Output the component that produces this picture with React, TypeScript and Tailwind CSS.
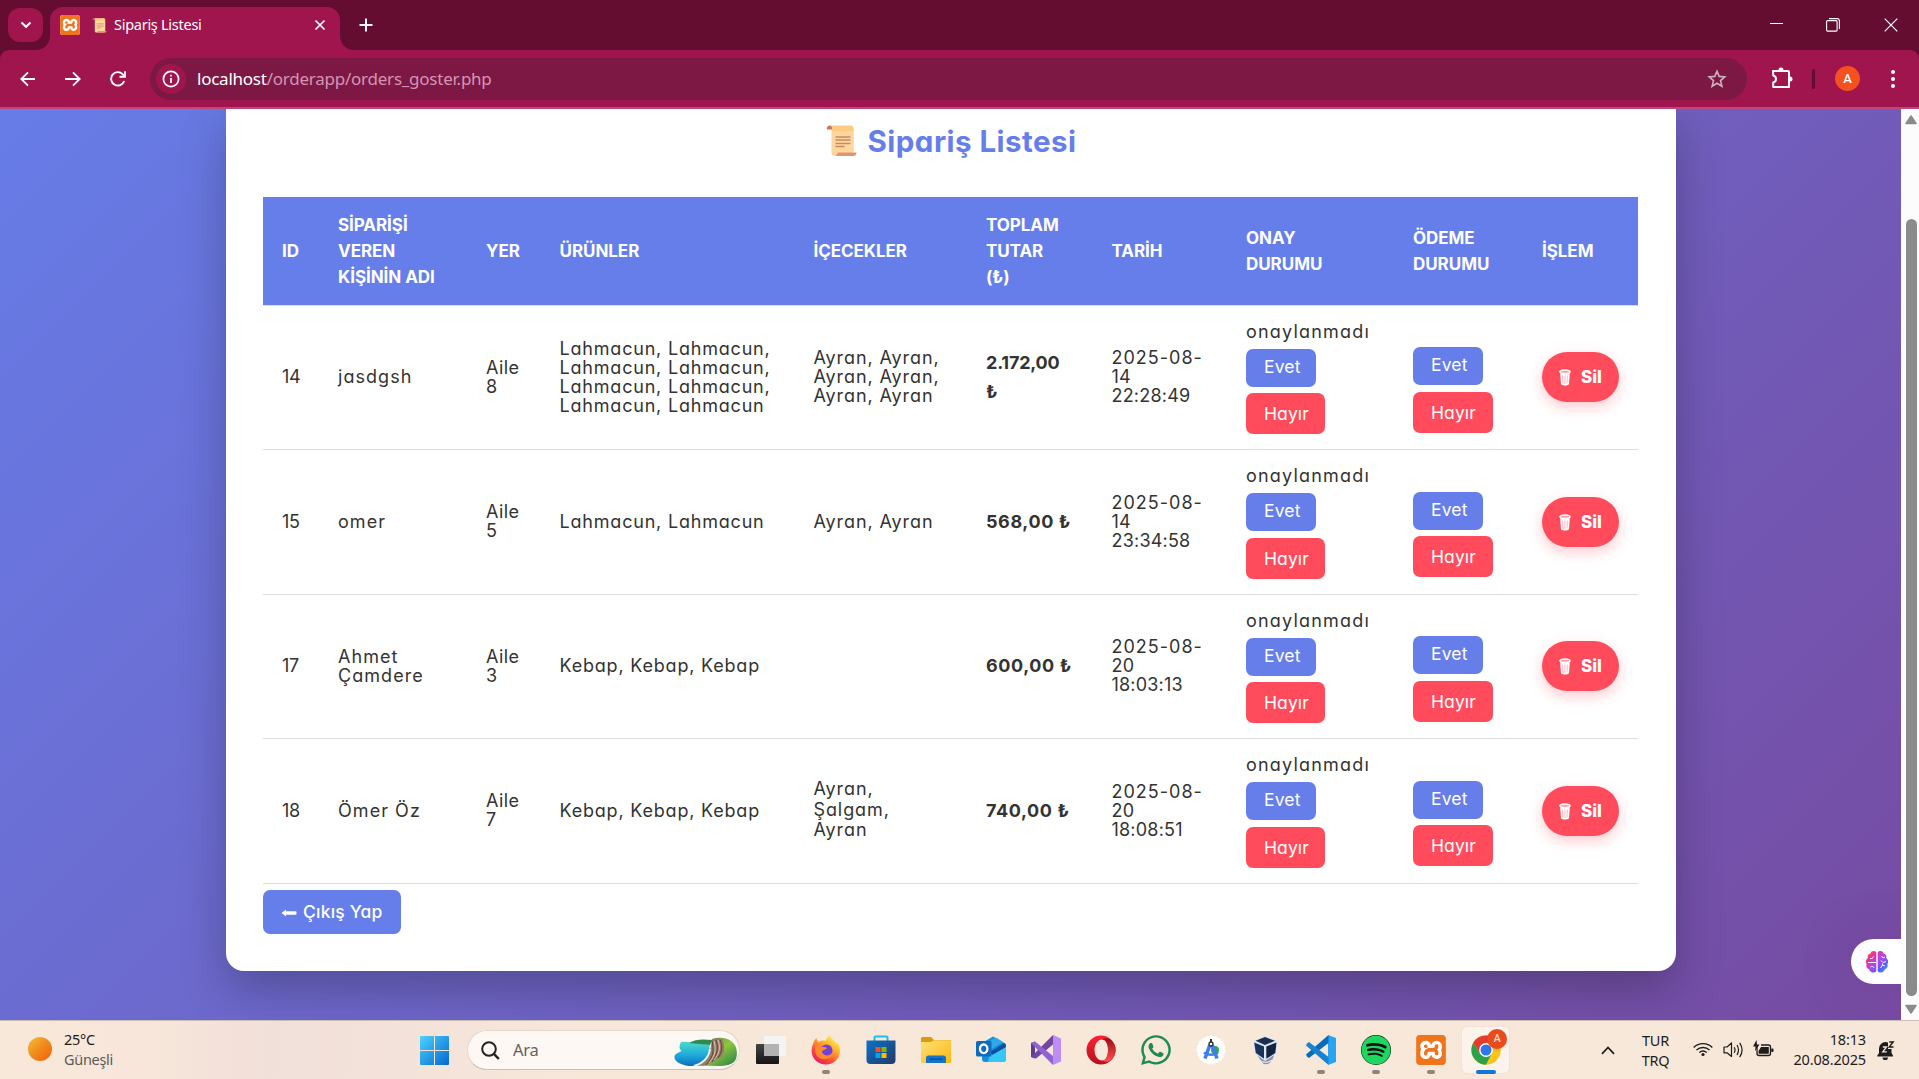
import type { ReactNode } from "react";
import { FaSpotify, FaWhatsapp } from "react-icons/fa";
import { SiXampp } from "react-icons/si";

/* ---------- Icons ---------- */

function Scroll({ className }: { className: string }) {
  return (
    <svg viewBox="0 0 30 32" className={className}>
      <path d="M4 1H24.500a3 3 0 0 1 2.500 3V27H8.500L5.500 5Z" fill="#fdd291" />
      <path d="M5 5V28a3 3 0 0 0 3 3H26V27H27V4Z" fill="#fed7a0" />
      <path d="M4 .5H25a3 3 0 0 1 2 3V6H6Z" fill="#fccb80" />
      <path d="M3.500 .5A3 3 0 0 0 .5 4.500H5.500V3A2.500 2.500 0 0 0 3.500 .5Z" fill="#c97a55" />
      <path d="M11 27.500H30a3.500 3.500 0 0 1-3.500 3.500H8c2 0 3-1.500 3-3.500Z" fill="#e2946c" />
      <path d="M9 12H24M9 15H24M9 18.500H24M9 21.500H18" stroke="#c98a62" strokeWidth="1.300" />
    </svg>
  );
}

function Xampp({ className }: { className: string }) {
  return (
    <span className={`block overflow-hidden rounded-[3px] bg-white ${className}`}>
      <SiXampp className="size-full text-[#f0741c]" />
    </span>
  );
}

function Trash() {
  return (
    <svg viewBox="0 0 12 17" className="h-[17px] w-3">
      <path d="M1.200 3.500 2 15.200C3.500 17 8.500 17 10 15.200L10.800 3.500Z" fill="#fff" />
      <ellipse cx="6" cy="2.800" rx="5.800" ry="2.500" fill="#fff" />
      <ellipse cx="6" cy="2.700" rx="4" ry="1" fill="#ff9aa6" />
      <path d="M3.500 6.500 4 14.500M6 6.500V15M8.500 6.500 8 14.500" stroke="#ffb3bc" strokeWidth=".9" />
    </svg>
  );
}

function Brain() {
  return (
    <svg viewBox="0 0 24 24" className="size-6">
      <defs>
        <linearGradient id="brain" x1="0" y1="0" x2="1" y2="1">
          <stop offset="0" stopColor="#ff9a1f" />
          <stop offset=".22" stopColor="#f0338f" />
          <stop offset=".5" stopColor="#b045f0" />
          <stop offset=".75" stopColor="#5b5cf5" />
          <stop offset="1" stopColor="#2fc4ff" />
        </linearGradient>
      </defs>
      <path
        d="M11.300 2.500C9.500.2 6 .8 5.600 3.400 3 3.600 2 6 2.800 8 .8 9.200.2 12.500 1.600 14c-.9 2.500.2 4.800 2.500 5.200C5 22.500 9.500 24 11.300 21ZM12.700 2.500c1.800-2.300 5.300-1.700 5.700.9 2.600.2 3.600 2.600 2.800 4.600 2 1.200 2.600 4.500 1.200 6 .9 2.500-.2 4.800-2.500 5.200C19 22.500 14.500 24 12.700 21Z"
        fill="url(#brain)"
      />
      <path
        d="M3 12.500H11M5 8.500c1.500.5 3-.3 3.500-2M5.500 17c1-1 2.800-.7 3.500.8M16.500 6l1.500 2 2-1M21 11.500l-3 1-2-2M15.500 18l2-3 2.500 1M17.500 15V13.500"
        stroke="#fff"
        strokeWidth="1"
        fill="none"
      />
    </svg>
  );
}

function Coast() {
  return (
    <svg viewBox="0 0 64 30" className="h-[30px] w-16">
      <defs>
        <linearGradient id="sea" x1="0" y1="0" x2="0" y2="1">
          <stop offset="0" stopColor="#49dcc8" />
          <stop offset=".55" stopColor="#1fa9dc" />
          <stop offset="1" stopColor="#0d6fb8" />
        </linearGradient>
        <linearGradient id="grass" x1="0" y1="0" x2="1" y2="1">
          <stop offset="0" stopColor="#3d9144" />
          <stop offset=".5" stopColor="#8fc63d" />
          <stop offset="1" stopColor="#1f7d4a" />
        </linearGradient>
      </defs>
      <path d="M38 2c6-2 14-2 19 2 6 4 7 12 5 18-3 6-10 7-18 7l-20-.5C30 20 40 14 38 2Z" fill="url(#grass)" />
      <path d="M37 3c4-2 8-2 11-1 3 6 3 12 0 17-5 4-12 7-17 9.500l-9 .5c7-8 17-12 15-26Z" fill="#9a7b68" />
      <path d="M38 4c2 9 2 15-6 24M42 3c3 8 1 15-4 22M46 3c3 6 2 12-2 18" stroke="#5d4440" strokeWidth="1" fill="none" />
      <path d="M40 4c2 8 2 14-5 22M44 3c3 8 1 14-4 20" stroke="#e3cdb4" strokeWidth=".9" fill="none" />
      <path d="M7 5c8-1 20 2 29 3-2 3 2 6-2 11-4 7-9 10-16 10C8 29-2 24 1 18c3-3 7-3 6-5-2-1-2-4 0-8Z" fill="url(#sea)" />
      <path d="M36 12c-1 9-8 15-16 17" stroke="#e9f7fb" strokeWidth="2" fill="none" />
      <path d="M15 6c6-4 14-4 23-3l-2 5Z" fill="#2f8a4d" />
    </svg>
  );
}

const svgBox = "size-[30px] overflow-visible";

function TaskView() {
  return (
    <svg viewBox="0 0 30 30" className={svgBox}>
      <defs>
        <linearGradient id="tv" x1="0" y1="0" x2="0" y2="1">
          <stop offset="0" stopColor="#444" />
          <stop offset="1" stopColor="#151515" />
        </linearGradient>
      </defs>
      <rect x="0" y="9" width="23" height="20" rx="1" fill="url(#tv)" />
      <rect x="8" y="1" width="22" height="20" rx="1" fill="#f4f4f4" />
      <path d="M8 9H23V21H8Z" fill="#b3b3b3" />
    </svg>
  );
}

function Firefox() {
  return (
    <svg viewBox="0 0 30 30" className={svgBox}>
      <defs>
        <linearGradient id="ff" x1=".8" y1=".1" x2=".2" y2="1">
          <stop offset="0" stopColor="#fff04a" />
          <stop offset=".35" stopColor="#ffa52a" />
          <stop offset=".65" stopColor="#ff5038" />
          <stop offset="1" stopColor="#e3106b" />
        </linearGradient>
      </defs>
      <path
        d="M19 0c-4 3-4 6-4 6-3-1-6 0-7 1C6 6 5.500 4 5.500 3 3 5 2.500 8 2.500 8 1 11 0 15 1 19c1.500 6 7 10.500 14 10.500 8 0 14-6 14-13.500 0-4-1-7-3.500-9l.2 2.500C24 5 20 4.500 19 0Z"
        fill="url(#ff)"
      />
      <circle cx="15.500" cy="15.500" r="6" fill="#7142d8" />
      <path d="M4 12c2-2 5-2 7 0 2 0 4 0 5 1-1 2-4 1-5 4 1 4 8 5 11 0 1 7-11 10-16 4-2-3-2-6-2-9Z" fill="#ff8a2a" />
    </svg>
  );
}

function Store() {
  return (
    <svg viewBox="0 0 30 30" className={svgBox}>
      <defs>
        <linearGradient id="st" x1="0" y1="0" x2="1" y2="1">
          <stop offset="0" stopColor="#0a72c8" />
          <stop offset="1" stopColor="#233a66" />
        </linearGradient>
      </defs>
      <path d="M8.500 6V2.500a1 1 0 0 1 1-1H20.500a1 1 0 0 1 1 1V6" fill="none" stroke="#21bdf0" strokeWidth="2" />
      <path d="M.5 5.500H29.500V25a4 4 0 0 1-4 4H4.500a4 4 0 0 1-4-4Z" fill="url(#st)" />
      <path d="M9.500 12H14.500V17H9.500Z" fill="#f25022" />
      <path d="M15.500 12H20.500V17H15.500Z" fill="#7fba00" />
      <path d="M9.500 18H14.500V23H9.500Z" fill="#00a4ef" />
      <path d="M15.500 18H20.500V23H15.500Z" fill="#ffb900" />
    </svg>
  );
}

function Folder() {
  return (
    <svg viewBox="0 0 30 30" className={svgBox}>
      <defs>
        <linearGradient id="fo" x1="0" y1="0" x2="1" y2="1">
          <stop offset="0" stopColor="#ffe07a" />
          <stop offset="1" stopColor="#fbb90d" />
        </linearGradient>
      </defs>
      <path d="M0 3.500A1.500 1.500 0 0 1 1.500 2H10L13 5H28.500A1.500 1.500 0 0 1 30 6.500V10H0Z" fill="#dd9a0a" />
      <path d="M0 7H10L13 5.200H29a1 1 0 0 1 1 1V27a1 1 0 0 1-1 1H1a1 1 0 0 1-1-1Z" fill="url(#fo)" />
      <path d="M5 28V23a2.500 2.500 0 0 1 2.500-2.500H22.500A2.500 2.500 0 0 1 25 23V28Z" fill="#1374c9" />
      <path d="M8.500 24.200H21.500" stroke="#0b4d90" strokeWidth="1.200" />
    </svg>
  );
}

function Outlook() {
  return (
    <svg viewBox="0 0 30 30" className={svgBox}>
      <path d="M6 8 17 1.500 30 9V24a3 3 0 0 1-3 3H9a3 3 0 0 1-3-3Z" fill="#1490df" />
      <path d="M14 18 30 9V24a3 3 0 0 1-3 3H12Z" fill="#38c6f4" />
      <path d="M14 17 28 8l2 2v2L16 20Z" fill="#0b4fa0" />
      <path d="M12 7 20 2.500 27 7 14 15Z" fill="#2da8e8" />
      <rect x="0" y="6" width="15.500" height="15.500" rx="1.500" fill="#0f6cbd" />
      <ellipse cx="7.700" cy="13.800" rx="3.700" ry="4.300" fill="none" stroke="#fff" strokeWidth="2.300" />
    </svg>
  );
}

function VisualStudio() {
  return (
    <svg viewBox="0 0 30 30" className={svgBox}>
      <path d="M0 8 4 6.500V23.500L0 22Z" fill="#5d3b96" />
      <path d="M22 0 30 3.500V26.500L22 30Z" fill="#bd8cf5" />
      <path d="M22 0V9.500L5 23.500 0 22Z" fill="#74479f" />
      <path d="M4 6.500 22 21V30L0 8Z" fill="#9062d4" />
    </svg>
  );
}

function Opera() {
  return (
    <svg viewBox="0 0 30 30" className={svgBox}>
      <defs>
        <linearGradient id="opA" x1="0" y1="0" x2="0" y2="1">
          <stop offset="0" stopColor="#ff2033" />
          <stop offset="1" stopColor="#b5101c" />
        </linearGradient>
        <linearGradient id="opB" x1="0" y1="0" x2="0" y2="1">
          <stop offset="0" stopColor="#9c0d12" />
          <stop offset="1" stopColor="#ff5252" />
        </linearGradient>
      </defs>
      <path fillRule="evenodd" d="M15 .5a14.500 14.500 0 1 0 0 29 14.500 14.500 0 1 0 0-29ZM16 4.500c4 0 6 5 6 10.500S20 25.500 16 25.500 8.500 21 8.500 15 12 4.500 16 4.500Z" fill="url(#opA)" />
      <path d="M16 4.500c3-2 6-1.500 8.500 0 7 6 7 15 0 21-2.500 1.500-5.500 2-8.500 0 4 0 6-5 6-10.500S20 4.500 16 4.500Z" fill="url(#opB)" />
    </svg>
  );
}

function AndroidStudio() {
  return (
    <svg viewBox="0 0 30 30" className={svgBox}>
      <circle cx="15" cy="15" r="13.700" fill="#fff" stroke="#fff" strokeWidth="1.500" strokeDasharray="3 1.500" />
      <circle cx="19" cy="15" r="4" fill="#31a853" />
      <path d="M13.800 10 9 23.500M16.200 10 21 23.500" stroke="#3f7df0" strokeWidth="3.600" />
      <path d="M8 17.500C12 20.500 18 20.500 22 17.500" stroke="#3f7df0" strokeWidth="2.600" fill="none" />
      <path d="M15 4V7" stroke="#333" strokeWidth="2" />
      <circle cx="15" cy="9" r="2" fill="#fff" stroke="#303030" strokeWidth="1.300" />
    </svg>
  );
}

function VirtualBox() {
  return (
    <svg viewBox="0 0 30 30" className={svgBox}>
      <path d="M6 20 12 28.500C15 30.500 21 29 23 20Z" fill="#8390ad" />
      <path d="M8 25c4 3 9 3 13 0" stroke="#dfe5f2" strokeWidth="1.200" fill="none" />
      <path d="M14 1 26.500 5.500 25.500 18.500 14 26 3.500 18.500 2 5.500Z" fill="#dfe6f1" />
      <path d="M14 2 24 5.800 14 10 4.500 5.800Z" fill="#19304f" />
      <path d="M3.200 7.500 13 11.500V23.800L4.800 18Z" fill="#1b3358" />
      <path d="M25.500 7.500 15.300 11.500V23.800L24.300 18Z" fill="#122440" />
    </svg>
  );
}

function VsCode() {
  return (
    <svg viewBox="0 0 30 30" className={svgBox}>
      <path d="M22 0 30 3V27L22 30Z" fill="#27a5f2" />
      <path d="M1 21.500 3 23 22.500 8V0L0 19.500Z" fill="#0a6bb8" />
      <path d="M1 8.500 3 7 22.500 22V30L0 10.500Z" fill="#1583cf" />
    </svg>
  );
}

function Chrome() {
  return (
    <svg viewBox="0 0 30 30" className={svgBox}>
      <circle cx="15" cy="15" r="14.700" fill="#fcc419" />
      <path d="M2.300 7.700A14.700 14.700 0 0 0 15 29.700L21 18 15 15 9 18.500Z" fill="#2da04c" />
      <path d="M2.300 7.700A14.700 14.700 0 0 1 27.700 7.700H15L9 18.500Z" fill="#e33b2e" />
      <circle cx="15" cy="15" r="6.900" fill="#fff" />
      <circle cx="15" cy="15" r="5.500" fill="#2f76ea" />
    </svg>
  );
}

/* ---------- Browser chrome ---------- */

function TabStrip() {
  return (
    <div className="flex h-[50px] items-start bg-[#650d31] text-white">
      <div className="mt-2 ml-2 flex h-[34px] w-[35px] items-center justify-center rounded-xl bg-[#a1154e]">
        <svg viewBox="0 0 12 8" className="h-2 w-3">
          <path d="M1.500 1.500 6 5.800 10.500 1.500" fill="none" stroke="#fff" strokeWidth="2" />
        </svg>
      </div>
      <svg viewBox="0 0 14 14" className="mt-9 -ml-[7px] size-3.5">
        <path d="M14 0V14H0A14 14 0 0 0 14 0Z" fill="#a1154e" />
      </svg>
      <div className="mt-[7px] flex h-[43px] w-[290px] items-center rounded-t-[13px] bg-[#a1154e] pr-3.5 pb-[7px] pl-2.5">
        <Xampp className="size-5" />
        <Scroll className="ml-3 h-[15px] w-[15px]" />
        <span className="ml-[7px] font-['Noto_Sans'] text-[14.500px] tracking-[-0.27px] whitespace-nowrap">Sipariş Listesi</span>
        <svg viewBox="0 0 12 12" className="ml-auto size-3">
          <path d="M1.500 1.500 10.500 10.500M10.500 1.500 1.500 10.500" stroke="#fff" strokeWidth="1.700" />
        </svg>
      </div>
      <svg viewBox="0 0 14 14" className="mt-9 size-3.5">
        <path d="M0 0V14H14A14 14 0 0 1 0 0Z" fill="#a1154e" />
      </svg>
      <svg viewBox="0 0 14 14" className="mt-[18px] ml-[5px] size-3.5">
        <path d="M7 .5V13.500M.5 7H13.500" stroke="#fff" strokeWidth="2" />
      </svg>
      <div className="ml-auto flex items-center pt-[18px] pr-[21px]">
        <div className="mb-1 h-px w-[13px] bg-white" />
        <svg viewBox="0 0 14 14" className="ml-[43px] size-3.5" fill="none" stroke="#fff" strokeWidth="1.100">
          <rect x=".6" y="2.600" width="10.500" height="10.500" rx="1" />
          <path d="M3 .6H11.500A2 2 0 0 1 13.400 2.500V11" />
        </svg>
        <svg viewBox="0 0 14 14" className="ml-11 size-3.5" stroke="#fff" strokeWidth="1.200">
          <path d="M.7.7 13.300 13.300M13.300.7.7 13.300" />
        </svg>
      </div>
    </div>
  );
}

function Toolbar() {
  return (
    <div className="bg-[#650d31]">
      <div className="flex h-[59px] items-center rounded-t-[9px] border-b-2 border-[#c0457a] bg-[#a1154e]">
        <svg viewBox="0 0 16 16" className="ml-5 size-4" fill="none" stroke="#fff" strokeWidth="1.800">
          <path d="M15 8H1.500M8 1.300 1.300 8 8 14.700" />
        </svg>
        <svg viewBox="0 0 16 16" className="ml-[29px] size-4" fill="none" stroke="#fff" strokeWidth="1.800">
          <path d="M0 8H14.500M8 1.300 14.700 8 8 14.700" />
        </svg>
        <svg viewBox="0 0 16 16" className="ml-[29px] size-4" fill="none" stroke="#fff" strokeWidth="1.900">
          <path d="M14.200 10A6.700 6.700 0 1 1 12.800 3.300L14 4.500" />
          <path d="M15 .3V5.800H9.500" />
        </svg>
        <div className="ml-6 flex h-[42px] w-[1597px] items-center rounded-full bg-[#7c1843] pr-5 pl-1.5">
          <div className="flex size-[30px] items-center justify-center rounded-full bg-[#a1154e]">
            <svg viewBox="0 0 18 18" className="size-[18px]" fill="none" stroke="#fff" strokeWidth="1.700">
              <circle cx="9" cy="9" r="7.600" />
              <path d="M9 8V13M9 4.800V6.600" />
            </svg>
          </div>
          <span className="mt-px ml-[11px] font-['Noto_Sans'] text-[17px] tracking-[-0.24px] text-[#d694b3]">
            <span className="text-white">localhost</span>/orderapp/orders_goster.php
          </span>
          <svg viewBox="0 0 20 20" className="mt-px ml-auto size-5" fill="none" stroke="#ccb3bf" strokeWidth="1.600">
            <path d="M10 2.200 12.200 7.400 17.800 7.900 13.500 11.600 14.900 17.200 10 14.200 5.100 17.200 6.500 11.600 2.200 7.900 7.800 7.400Z" />
          </svg>
        </div>
        <svg viewBox="0 0 22 22" className="mb-0.5 ml-6 size-[22px]" fill="none" stroke="#fff" strokeWidth="2">
          <path d="M2 4H17a1 1 0 0 1 1 1V20H2.200V15.500a3.600 3.600 0 0 0 0-7Z" strokeLinejoin="round" />
          <path d="M7.500 3a2.500 2.500 0 0 1 5 0ZM19 9.500a2.500 2.500 0 0 1 0 5Z" fill="#fff" stroke="none" />
        </svg>
        <div className="ml-[19px] h-5 w-[3px] rounded bg-[#650d31]" />
        <div className="ml-5 flex size-[25px] items-center justify-center rounded-full bg-[#f4511e] font-[Roboto] text-[13px] font-medium text-white">
          A
        </div>
        <div className="ml-[31px] flex flex-col gap-[3px]">
          <i className="size-1 rounded-full bg-white" />
          <i className="size-1 rounded-full bg-white" />
          <i className="size-1 rounded-full bg-white" />
        </div>
      </div>
    </div>
  );
}

/* ---------- Orders table ---------- */

const columns = "grid w-[1375px] grid-cols-[56px_148px_73.500px_254px_172.500px_125.500px_134.500px_167px_129px_115px]";

const headers = [
  ["ID"],
  ["SİPARİŞİ", "VEREN", "KİŞİNİN ADI"],
  ["YER"],
  ["ÜRÜNLER"],
  ["İÇECEKLER"],
  ["TOPLAM", "TUTAR", "(₺)"],
  ["TARİH"],
  ["ONAY", "DURUMU"],
  ["ÖDEME", "DURUMU"],
  ["İŞLEM"],
];

type Order = {
  id: string;
  name: string[];
  place: string[];
  food: string[];
  drinks: string[];
  total: string[];
  date: string[];
};

const orders: Order[] = [
  {
    id: "14",
    name: ["jasdgsh"],
    place: ["Aile", "8"],
    food: ["Lahmacun, Lahmacun,", "Lahmacun, Lahmacun,", "Lahmacun, Lahmacun,", "Lahmacun, Lahmacun"],
    drinks: ["Ayran, Ayran,", "Ayran, Ayran,", "Ayran, Ayran"],
    total: ["2.172,00", "₺"],
    date: ["2025-08-", "14", "22:28:49"],
  },
  {
    id: "15",
    name: ["omer"],
    place: ["Aile", "5"],
    food: ["Lahmacun, Lahmacun"],
    drinks: ["Ayran, Ayran"],
    total: ["568,00 ₺"],
    date: ["2025-08-", "14", "23:34:58"],
  },
  {
    id: "17",
    name: ["Ahmet", "Çamdere"],
    place: ["Aile", "3"],
    food: ["Kebap, Kebap, Kebap"],
    drinks: [],
    total: ["600,00 ₺"],
    date: ["2025-08-", "20", "18:03:13"],
  },
  {
    id: "18",
    name: ["Ömer Öz"],
    place: ["Aile", "7"],
    food: ["Kebap, Kebap, Kebap"],
    drinks: ["Ayran,", "Şalgam,", "Ayran"],
    total: ["740,00 ₺"],
    date: ["2025-08-", "20", "18:08:51"],
  },
];

function Lines({ lines, className = "" }: { lines: string[]; className?: string }) {
  return (
    <div className={`flex flex-col justify-center pl-[19px] whitespace-nowrap ${className}`}>
      {lines.map((line, i) => (
        <span key={i}>{line}</span>
      ))}
    </div>
  );
}

function Choice({ kind, className = "" }: { kind: "Evet" | "Hayır"; className?: string }) {
  return (
    <button
      className={`flex shrink-0 items-center rounded-[7px] pl-[18px] text-[17.500px] leading-none text-white ${
        kind === "Evet" ? "h-[38px] w-[70px] bg-[#667eea] pb-0.5 tracking-[0.15px]" : "h-[41px] bg-[#ff4b5c] tracking-[0.1px]"
      } ${className}`}
    >
      {kind}
    </button>
  );
}

function OrderRow({ order, tall }: { order: Order; tall: boolean }) {
  return (
    <div className={`${columns} border-b border-[#ddd] text-[18px] leading-[19px] ${tall ? "h-[145px]" : "h-36"}`}>
      <Lines lines={[order.id]} className="pb-0.5 tracking-[-0.4px]" />
      <Lines lines={order.name} className="pb-0.5 tracking-[1.050px]" />
      <Lines lines={order.place} className="pb-0.5 tracking-[0.450px]" />
      <Lines lines={order.food} className="pb-0.5 tracking-[0.800px]" />
      <Lines
        lines={order.drinks}
        className={order.drinks.includes("Şalgam,") ? "pb-0.5 leading-[20.500px] tracking-[0.900px]" : "pb-0.5 tracking-[0.900px]"}
      />
      <Lines
        lines={order.total}
        className={order.total.length > 1 ? "pb-0.5 leading-[29px] font-bold tracking-[-0.200px]" : "pb-0.5 leading-[29px] font-bold tracking-[0.600px]"}
      />
      <div className="flex flex-col justify-center pb-0.5 pl-[19px] tracking-[0.2px]">
        <span className="tracking-[1px]">{order.date[0]}</span>
        <span>{order.date[1]}</span>
        <span>{order.date[2]}</span>
      </div>
      <div className="flex flex-col items-start pt-4 pl-[19px]">
        <span className="h-[27px] tracking-[1.2px]">onaylanmadı</span>
        <Choice kind="Evet" />
        <Choice kind="Hayır" className={tall ? "mt-[7px] w-[79px]" : "mt-1.5 w-[79px]"} />
      </div>
      <div className={`flex flex-col items-start pl-[19px] ${tall ? "pt-[42px]" : "pt-[41px]"}`}>
        <Choice kind="Evet" />
        <Choice kind="Hayır" className={tall ? "mt-1.5 w-20" : "mt-[7px] w-20"} />
      </div>
      <div className={`pl-[19px] ${tall ? "pt-[47px]" : "pt-[46px]"}`}>
        <button className="flex h-[50px] w-[77px] items-center rounded-full bg-[#ff4b5c] pl-[17px] text-[17px] font-extrabold text-white shadow-[0_5px_14px_rgba(255,75,92,0.3)]">
          <Trash />
          <span className="ml-[10px]">Sil</span>
        </button>
      </div>
    </div>
  );
}

function Page() {
  return (
    <div className="flex h-[911px] overflow-hidden">
      <main className="relative flex w-[1901px] overflow-hidden bg-linear-[135deg,#667eea,#764ba2] bg-[length:100%_1015px] bg-bottom">
        <section className="ml-[226px] h-[862px] w-[1450px] rounded-b-[18px] bg-white px-[37px] font-[Inter] text-[#333] shadow-[0_18px_46px_rgba(0,0,0,0.25)] [font-feature-settings:'cv11']">
          <h1 className="flex h-[88px] items-start justify-center pt-[14px] text-[29.500px] leading-9 font-bold text-[#667eea]">
            <Scroll className="mt-0.5 mr-[11px] h-8 w-[31px]" />
            <span className="tracking-[0.45px]">Sipariş Listesi</span>
          </h1>
          <div className={`${columns} h-[109px] border-b border-[#ddd] bg-[#667eea] bg-clip-padding text-[17px] leading-[26px] font-bold text-white`}>
            {headers.map((h) => (
              <Lines key={h.join()} lines={h} className="tracking-[-0.050px]" />
            ))}
          </div>
          {orders.map((o, i) => (
            <OrderRow key={o.id} order={o} tall={i % 2 === 1} />
          ))}
          <button className="mt-1.5 flex h-11 w-[138px] items-center rounded-[7px] bg-[#667eea] pl-[18px] text-[17.500px] font-medium text-white">
            <svg viewBox="0 0 15 8" className="mt-0.5 mr-1.5 h-2 w-4">
              <path d="M0 4 4.500.5V2.300H14a1 1 0 0 1 1 1V4.700a1 1 0 0 1-1 1H4.500V7.500Z" fill="#fff" />
            </svg>
            <span className="tracking-[0.2px] whitespace-nowrap">Çıkış Yap</span>
          </button>
        </section>
        <div className="absolute top-[830px] right-0 flex h-[45px] w-[50px] items-center rounded-l-full bg-white pl-3.5 shadow-[0_0_40px_rgba(118,60,140,0.6)]">
          <Brain />
        </div>
      </main>
      <div className="flex w-[18px] flex-col items-center bg-[#fcfcfc] pt-1.5 pb-1.5 pl-0.5">
        <svg viewBox="0 0 12 10" className="h-2.5 w-3">
          <path d="M6 1 11 8.500H1Z" fill="#8b8b8b" stroke="#8b8b8b" strokeWidth="1.500" strokeLinejoin="round" />
        </svg>
        <div className="mt-[94px] h-[779px] w-[11px] rounded-full bg-[#8b8b8b]" />
        <svg viewBox="0 0 12 10" className="mt-2 h-2.5 w-3">
          <path d="M6 9 11 1.500H1Z" fill="#8b8b8b" stroke="#8b8b8b" strokeWidth="1.500" strokeLinejoin="round" />
        </svg>
      </div>
    </div>
  );
}

/* ---------- Taskbar ---------- */

const apps: { name: string; icon: ReactNode; running?: boolean }[] = [
  { name: "taskview", icon: <TaskView /> },
  { name: "firefox", icon: <Firefox />, running: true },
  { name: "store", icon: <Store /> },
  { name: "folder", icon: <Folder /> },
  { name: "outlook", icon: <Outlook /> },
  { name: "visualstudio", icon: <VisualStudio /> },
  { name: "opera", icon: <Opera /> },
  { name: "whatsapp", icon: <FaWhatsapp className="size-[34px] shrink-0 text-[#1c8b55]" /> },
  { name: "androidstudio", icon: <AndroidStudio /> },
  { name: "virtualbox", icon: <VirtualBox /> },
  { name: "vscode", icon: <VsCode />, running: true },
  { name: "spotify", icon: <FaSpotify className="size-[30px] rounded-full bg-[#111] text-[#1ed760]" />, running: true },
  { name: "xampp", icon: <Xampp className="size-[30px]" />, running: true },
];

function Taskbar() {
  return (
    <footer className="flex h-[59px] items-start border-t border-[#c9bcb5] bg-linear-[90deg,#f8e8da,#f7e6d9_8%,#f1dfd9_14%,#f7e7d9_30%,#f8e8d8_60%,#f7e7da] font-['Noto_Sans'] text-[14.500px] tracking-[-0.3px] text-[#1c1c1c]">
      <div className="flex w-[420px] items-start pl-7">
        <div className="mt-4 size-6 rounded-full bg-linear-[135deg,#f2c13a,#f08a1c_50%,#f0600c]" />
        <div className="mt-2 ml-3 leading-5">
          <div>25°C</div>
          <div className="text-[#5f5a57]">Güneşli</div>
        </div>
      </div>
      <svg viewBox="0 0 29 29" className="mt-[15px] size-[29px]">
        <defs>
          <linearGradient id="win" x1="0" y1="0" x2="1" y2="1" gradientUnits="objectBoundingBox">
            <stop offset="0" stopColor="#4fd2ff" />
            <stop offset="1" stopColor="#0069cf" />
          </linearGradient>
        </defs>
        <path d="M1 0H14V14H0V1A1 1 0 0 1 1 0ZM15 0H28A1 1 0 0 1 29 1V14H15ZM0 15H14V29H1A1 1 0 0 1 0 28ZM15 15H29V28A1 1 0 0 1 28 29H15Z" fill="url(#win)" />
      </svg>
      <div className="mt-[9px] ml-[18px] flex h-10 w-[273px] items-center rounded-full border border-[#e4d6cb] border-b-[#cdbfb5] bg-[#fdf8f3] pr-px pl-[13px]">
        <svg viewBox="0 0 19 19" className="size-[19px]" fill="none" stroke="#222" strokeWidth="2">
          <circle cx="8" cy="8" r="6.800" />
          <path d="M12.700 12.700 17.800 18" strokeWidth="2.500" />
        </svg>
        <span className="mt-px ml-[13px] text-[16.500px] text-[#666160]">Ara</span>
        <div className="mt-1 ml-auto">
          <Coast />
        </div>
      </div>
      <div className="ml-[3px] flex">
        {apps.map((app) => (
          <div key={app.name} className="flex h-[58px] w-[55px] flex-col items-center">
            <div className="mt-3.5 flex size-[30px] items-center justify-center">{app.icon}</div>
            {app.running && <div className="mt-[5px] h-1 w-2 rounded-full bg-[#8c857d]" />}
          </div>
        ))}
      </div>
      <div className="relative mt-[5px] ml-[3px] flex h-12 w-[49px] flex-col items-center rounded-md border border-[#efe3da] bg-[#fcf3ec]">
        <div className="mt-2">
          <Chrome />
        </div>
        <div className="mt-[5px] h-1 w-5 shrink-0 rounded-full bg-[#0f78d4]" />
        <div className="absolute top-[2px] right-[2px] flex size-5 items-center justify-center rounded-full bg-[#ea4a1c] font-[Roboto] text-[11px] font-medium text-[#ffd9cc] shadow">
          A
        </div>
      </div>
      <svg viewBox="0 0 14 9" className="mt-[25px] ml-[91px] h-[9px] w-3.5" fill="none" stroke="#1c1c1c" strokeWidth="1.700">
        <path d="M1 7.800 7 1.500 13 7.800" />
      </svg>
      <div className="mt-[9px] ml-6 w-[33px] text-center leading-5">
        <div>TUR</div>
        <div>TRQ</div>
      </div>
      <svg viewBox="0 0 20 16" className="mt-5 ml-[21px] h-4 w-5" fill="none" stroke="#1c1c1c" strokeWidth="1.400">
        <path d="M.7 6.500A13 13 0 0 1 19.300 6.500M3.500 9A9.500 9.500 0 0 1 16.500 9M6.300 11.500A6 6 0 0 1 13.700 11.500" />
        <circle cx="10" cy="13.500" r="1.600" fill="#1c1c1c" stroke="none" />
      </svg>
      <svg viewBox="0 0 21 18" className="mt-5 ml-2.5 h-[18px] w-[21px]" fill="none" stroke="#1c1c1c" strokeWidth="1.200">
        <path d="M1 6H4L8.500 2V15.500L4 11.800H1Z" strokeLinejoin="round" />
        <path d="M11.200 6.200Q12.800 9 11.200 11.800M14 4Q17 9 14 14M16.700 1.800Q21.500 9 16.700 16.200" />
      </svg>
      <svg viewBox="0 0 21 17" className="mt-[19px] ml-[9px] h-[17px] w-[21px]">
        <path d="M4 6V13.500A2 2 0 0 0 6 15.500H15.500A2 2 0 0 0 17.500 13.500V7A2 2 0 0 0 15.500 5H8" fill="none" stroke="#1c1c1c" strokeWidth="1.300" />
        <path d="M8 7H15.800V13.800H5.500V11ZM18.300 8.500H19.500a1 1 0 0 1 1 1V11a1 1 0 0 1-1 1H18.300ZM3.500 0 0 6.500H2.500L2 11 6.500 4.500H4Z" fill="#1c1c1c" />
      </svg>
      <div className="mt-2 ml-auto pr-[11px] text-right leading-5 tracking-[-0.15px]">
        <div>18:13</div>
        <div>20.08.2025</div>
      </div>
      <svg viewBox="0 0 18 19" className="mt-5 mr-6 h-[19px] w-[18px]">
        <path d="M8.500 1A6.500 6.500 0 0 0 2 7.500V12L.3 14.500V15.500H16V14.500L14.500 12V8H11V1.500ZM5.500 16.500H11A2.700 2.700 0 0 1 5.500 16.500Z" fill="#1c1c1c" />
        <path d="M5.800 6H9.500L5.800 10.800H9.800" stroke="#f7e7d9" strokeWidth="1.300" fill="none" />
        <path d="M12.200 1H16.200L12.200 6H16.500" stroke="#1c1c1c" strokeWidth="1.400" fill="none" />
      </svg>
    </footer>
  );
}

export default function App() {
  return (
    <div className="h-[1079px] w-[1919px] overflow-hidden">
      <TabStrip />
      <Toolbar />
      <Page />
      <Taskbar />
    </div>
  );
}
